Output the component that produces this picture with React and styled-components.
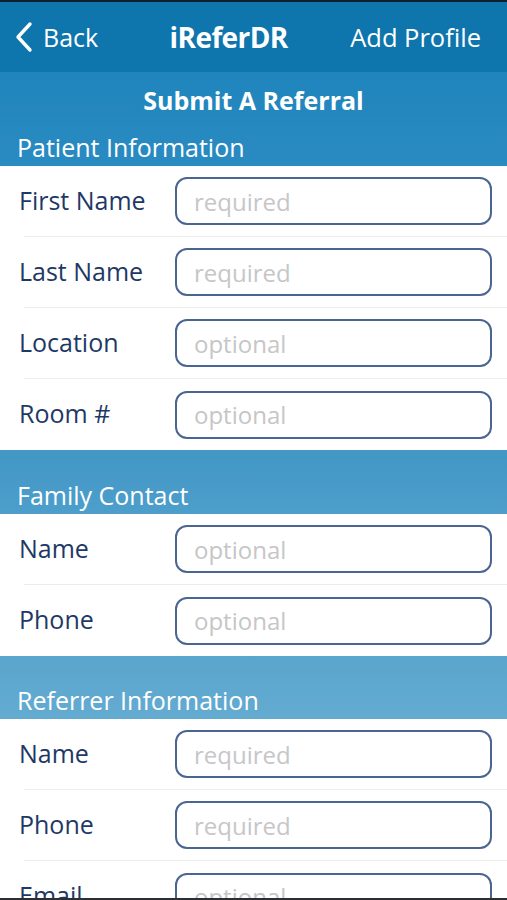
import React from "react";
import styled, { createGlobalStyle } from "styled-components";

const Global = createGlobalStyle`
  html, body {
    margin: 0;
    padding: 0;
    background: #ffffff;
  }
  body {
    font-family: "Open Sans", "Lato", sans-serif;
  }
`;

const Screen = styled.div`
  width: 507px;
  height: 900px;
  overflow: hidden;
  display: flex;
  flex-direction: column;
  background: #fff;
  border-top: 2px solid #10202c;
  border-bottom: 2px solid #2b2f33;
  box-sizing: border-box;
`;

const NavBar = styled.header`
  height: 70px;
  flex-shrink: 0;
  display: flex;
  align-items: center;
  justify-content: space-between;
  padding: 0 26px 0 14px;
  background: #0f75ad;
  color: #fff;
`;

const BackButton = styled.div`
  display: flex;
  align-items: center;
  gap: 9px;
  font-size: 25px;
`;

const Brand = styled.div`
  font-size: 28px;
  font-weight: bold;
  letter-spacing: -0.6px;
  margin-left: 9px;
`;

const NavAction = styled.div`
  font-size: 25.5px;
`;

const Band = styled.section`
  flex-shrink: 0;
  display: flex;
  flex-direction: column;
  justify-content: flex-end;
  height: ${(p) => p.$height}px;
  background: linear-gradient(${(p) => p.$from}, ${(p) => p.$to});
  color: #fff;
`;

const Title = styled.h1`
  flex: 1;
  margin: 0;
  padding-top: 11px;
  text-align: center;
  font-size: 25px;
  font-weight: bold;
`;

const SectionTitle = styled.h2`
  margin: 0;
  padding: 0 0 3px 17px;
  font-size: 25px;
  font-weight: normal;
  line-height: 32px;
`;

const Row = styled.div`
  height: ${(p) => (p.$last ? 71 : 70)}px;
  flex-shrink: 0;
  display: flex;
  align-items: center;
  padding: 0 15px 0 19px;
  box-sizing: border-box;
`;

const Label = styled.label`
  width: 156px;
  flex-shrink: 0;
  font-size: 25px;
  color: #1e3965;
  margin-top: -3px;
`;

const Field = styled.input`
  flex: 1;
  min-width: 0;
  height: 48px;
  box-sizing: border-box;
  border: 2px solid #4a6591;
  border-radius: 12px;
  padding: 0 17px;
  font-family: "Open Sans", "Lato", sans-serif;
  font-size: 24px;
  color: #333;
  background: #fff;
  outline: none;

  &::placeholder {
    color: #c6c6c8;
  }
`;

const Separator = styled.div`
  height: 1px;
  flex-shrink: 0;
  margin-left: 24px;
  background: #ececec;
`;

const Chevron = () => (
  <svg width="20" height="32" viewBox="0 0 20 32">
    <path
      d="M16 3 L4 16 L16 29"
      fill="none"
      stroke="#fff"
      strokeWidth="3.4"
      strokeLinecap="round"
      strokeLinejoin="round"
    />
  </svg>
);

const FormRow = ({ label, hint, last }) => (
  <>
    <Row $last={last}>
      <Label>{label}</Label>
      <Field placeholder={hint} />
    </Row>
    {!last && <Separator />}
  </>
);

const patient = [
  ["First Name", "required"],
  ["Last Name", "required"],
  ["Location", "optional"],
  ["Room #", "optional"],
];

const family = [
  ["Name", "optional"],
  ["Phone", "optional"],
];

const referrer = [
  ["Name", "required"],
  ["Phone", "required"],
  ["Email", "optional"],
];

const Rows = ({ items }) =>
  items.map(([label, hint], i) => (
    <FormRow key={label} label={label} hint={hint} last={i === items.length - 1} />
  ));

export default function App() {
  return (
    <>
      <Global />
      <Screen>
        <NavBar>
          <BackButton>
            <Chevron />
            Back
          </BackButton>
          <Brand>iReferDR</Brand>
          <NavAction>Add Profile</NavAction>
        </NavBar>

        <Band $from="#1f85bc" $to="#2a8bc1" $height={94}>
          <Title>Submit A Referral</Title>
          <SectionTitle>Patient Information</SectionTitle>
        </Band>
        <Rows items={patient} />

        <Band $from="#4297c5" $to="#4d9ecb" $height={64}>
          <SectionTitle>Family Contact</SectionTitle>
        </Band>
        <Rows items={family} />

        <Band $from="#5aa5cd" $to="#64abd1" $height={63}>
          <SectionTitle>Referrer Information</SectionTitle>
        </Band>
        <Rows items={referrer} />
      </Screen>
    </>
  );
}
